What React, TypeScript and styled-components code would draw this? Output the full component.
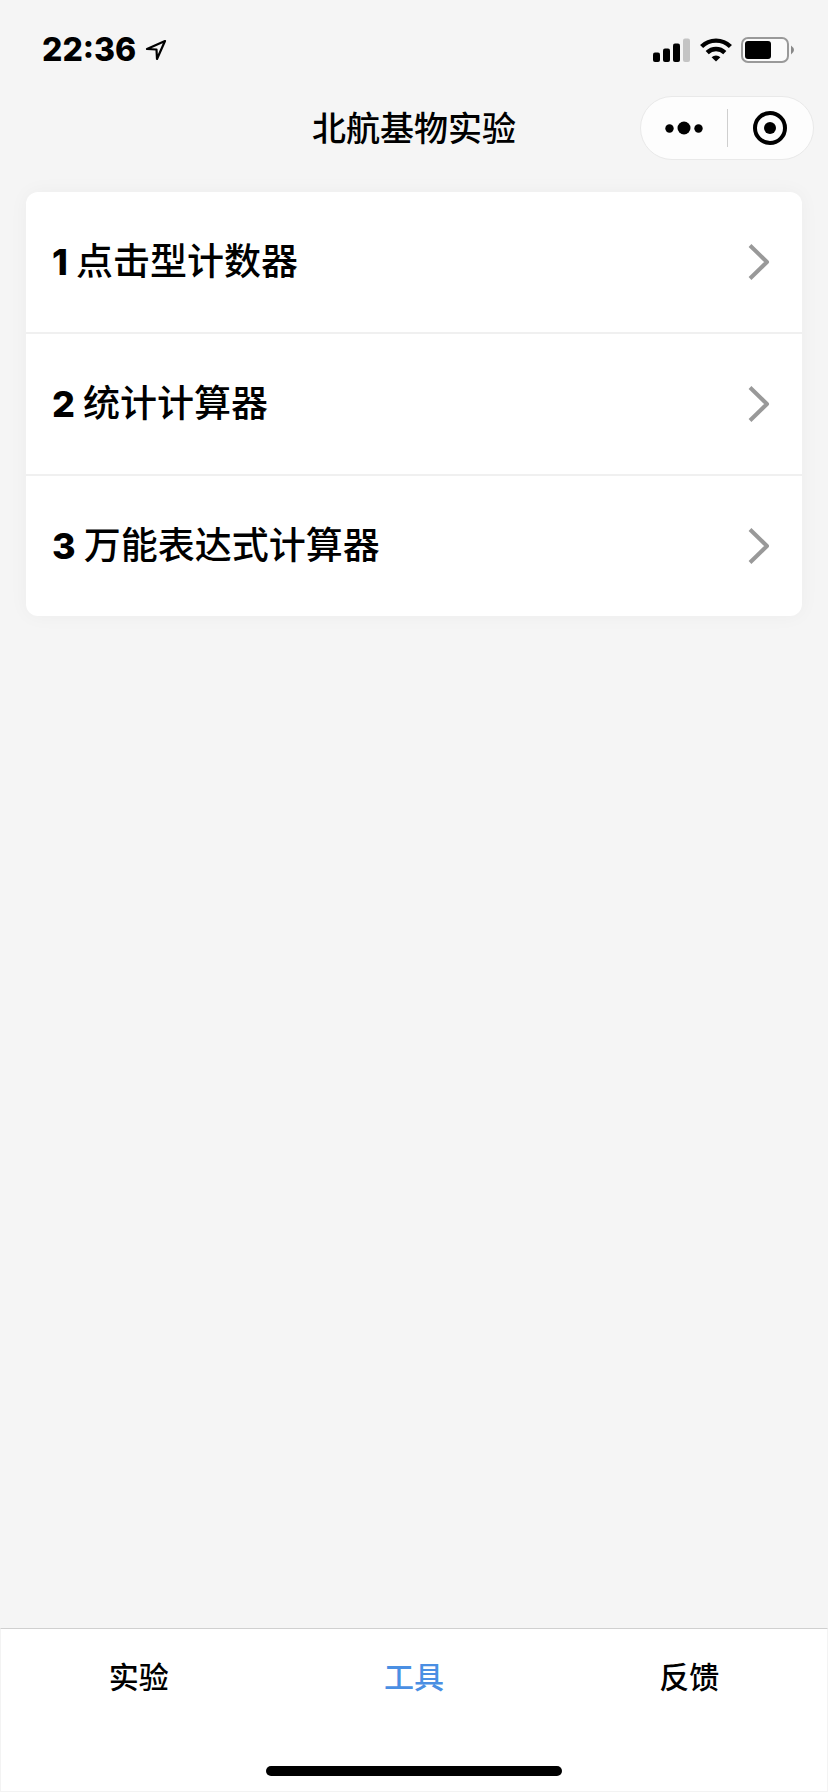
import React from "react";
import styled, { createGlobalStyle } from "styled-components";

const GlobalStyle = createGlobalStyle`
  * { box-sizing: border-box; }
  body {
    margin: 0;
    background: #f5f5f5;
    color: #000;
    font-family: Inter, "Noto Sans CJK SC", sans-serif;
  }
`;

const Page = styled.div`
  display: flex;
  flex-direction: column;
  min-height: 100vh;
`;

const StatusBar = styled.div`
  display: flex;
  align-items: center;
  justify-content: space-between;
  height: 88px;
  padding: 12px 34px 0 42px;
`;

const StatusGroup = styled.div`
  display: flex;
  align-items: center;
  gap: 9px;
`;

const Time = styled.span`
  font-size: 32px;
  line-height: 40px;
  font-weight: 800;
`;

const NavBar = styled.header`
  display: grid;
  grid-template-columns: 1fr auto 1fr;
  align-items: center;
  height: 80px;
  padding: 0 14px;
`;

const Title = styled.h1`
  grid-column: 2;
  margin: 0;
  padding-top: 2px;
  font-size: 34px;
  line-height: 48px;
  font-weight: 500;
`;

const Capsule = styled.div`
  justify-self: end;
  display: flex;
  align-items: center;
  width: 174px;
  height: 64px;
  border: 1px solid #e9e9e9;
  border-radius: 32px;
  background: #fdfdfd;
`;

const CapsuleButton = styled.button`
  flex: 1;
  display: flex;
  align-items: center;
  justify-content: center;
  height: 100%;
  padding: 0;
  border: 0;
  background: none;
`;

const CapsuleDivider = styled.span`
  width: 1px;
  height: 38px;
  background: #cfcfcf;
`;

const Content = styled.main`
  flex: 1;
  padding: 24px 26px;
`;

const Card = styled.ul`
  margin: 0;
  padding: 0;
  list-style: none;
  overflow: hidden;
  border-radius: 12px;
  background: #fff;
  box-shadow: 0 0 20px rgba(0, 0, 0, 0.04);
`;

const Item = styled.li`
  & + & { border-top: 2px solid #f0f0f0; }
`;

const ItemLink = styled.a`
  display: flex;
  align-items: center;
  justify-content: space-between;
  height: 140px;
  padding: 0 32px 0 26px;
  color: #000;
  text-decoration: none;
`;

const ItemText = styled.span`
  display: flex;
  align-items: baseline;
  gap: 8px;
  font-size: 37px;
  line-height: 52px;
  font-weight: 500;
`;

const ItemNumber = styled.b`
  font-size: 36px;
  font-weight: 800;
`;

const TabBar = styled.footer`
  height: 164px;
  border: 1px solid #f3f3f3;
  border-top-color: #d0d0d0;
  background: #fff;
  display: flex;
  flex-direction: column;
  align-items: center;
  justify-content: space-between;
  padding-bottom: 15px;
`;

const Tabs = styled.nav`
  display: flex;
  width: 100%;
`;

const Tab = styled.a<{ $active?: boolean }>`
  flex: 1;
  text-align: center;
  font-size: 30px;
  line-height: 96px;
  font-weight: 500;
  color: ${(p) => (p.$active ? "#4a8fe3" : "#000")};
  text-decoration: none;
`;

const HomeIndicator = styled.div`
  width: 296px;
  height: 10px;
  border-radius: 5px;
  background: #000;
`;

const LocationIcon = () => (
  <svg width="22" height="22" viewBox="0 0 22 22" fill="none" stroke="#000" strokeWidth="2.200" strokeLinejoin="round">
    <path d="M20 2 L2 10 L11.500 10.500 L12 20 Z" />
  </svg>
);

const SignalIcon = () => (
  <svg width="38" height="24" viewBox="0 0 38 24">
    <rect x="0" y="14.500" width="7" height="9.500" rx="2" />
    <rect x="10" y="10.500" width="7" height="13.500" rx="2" />
    <rect x="20" y="5.500" width="7" height="18.500" rx="2" />
    <rect x="30" y="0.500" width="7" height="23.500" rx="2" fill="#c4c4c4" />
  </svg>
);

const WifiIcon = () => (
  <svg width="32" height="24" viewBox="0 0 32 24" fill="none" stroke="#000" strokeWidth="4.400">
    <path d="M1.600 8.500 A20.500 20.500 0 0 1 30.400 8.500" />
    <path d="M7.200 14.600 A12.500 12.500 0 0 1 24.800 14.600" />
    <path d="M16 23.500 L11.600 19.300 A6.400 6.400 0 0 1 20.400 19.300 Z" fill="#000" stroke="none" />
  </svg>
);

const BatteryIcon = () => (
  <svg width="53" height="26" viewBox="0 0 53 26">
    <rect x="1" y="1" width="46" height="24" rx="6" fill="#fafafa" stroke="#999" strokeWidth="2" />
    <rect x="4" y="4" width="26" height="18" rx="3" />
    <path d="M50 8.500 Q56 13 50 17.500 Z" fill="#888" />
  </svg>
);

const MoreIcon = () => (
  <svg width="38" height="14" viewBox="0 0 38 14">
    <circle cx="4.500" cy="7.500" r="4.200" />
    <circle cx="19" cy="7" r="6.500" />
    <circle cx="33.500" cy="7.500" r="4.200" />
  </svg>
);

const TargetIcon = () => (
  <svg width="34" height="34" viewBox="0 0 34 34">
    <circle cx="17" cy="17" r="15" fill="none" stroke="#000" strokeWidth="4" />
    <circle cx="17" cy="17" r="6" />
  </svg>
);

const ChevronIcon = () => (
  <svg width="22" height="36" viewBox="0 0 22 36" fill="none" stroke="#999" strokeWidth="4" strokeLinejoin="round">
    <path d="M2 1.500 L19 18 L2 34.500" />
  </svg>
);

const tools = ["点击型计数器", "统计计算器", "万能表达式计算器"];
const tabs = ["实验", "工具", "反馈"];

export default function App() {
  return (
    <Page lang="zh-CN">
      <GlobalStyle />
      <StatusBar>
        <StatusGroup>
          <Time>22:36</Time>
          <LocationIcon />
        </StatusGroup>
        <StatusGroup>
          <SignalIcon />
          <WifiIcon />
          <BatteryIcon />
        </StatusGroup>
      </StatusBar>
      <NavBar>
        <Title>北航基物实验</Title>
        <Capsule>
          <CapsuleButton aria-label="更多">
            <MoreIcon />
          </CapsuleButton>
          <CapsuleDivider />
          <CapsuleButton aria-label="关闭">
            <TargetIcon />
          </CapsuleButton>
        </Capsule>
      </NavBar>
      <Content>
        <Card>
          {tools.map((name, i) => (
            <Item key={name}>
              <ItemLink href="#">
                <ItemText>
                  <ItemNumber>{i + 1}</ItemNumber>
                  {name}
                </ItemText>
                <ChevronIcon />
              </ItemLink>
            </Item>
          ))}
        </Card>
      </Content>
      <TabBar>
        <Tabs>
          {tabs.map((name) => (
            <Tab key={name} href="#" $active={name === "工具"}>
              {name}
            </Tab>
          ))}
        </Tabs>
        <HomeIndicator />
      </TabBar>
    </Page>
  );
}
